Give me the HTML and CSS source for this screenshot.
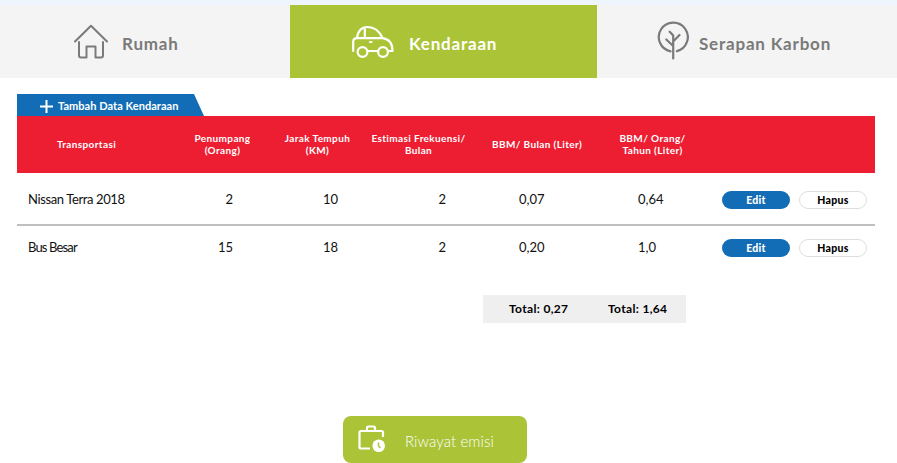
FILE: index.html
```html
<!DOCTYPE html>
<html lang="id">
<head>
<meta charset="utf-8">
<title>Kendaraan</title>
<link rel="stylesheet" href="styles.css">
</head>
<body>
<nav class="tabs">
  <a class="tab tab-home">
    <svg class="icon-home" width="36" height="36" viewBox="0 0 36 36" fill="none" stroke="#7a7a7a" stroke-width="2" stroke-linecap="round" stroke-linejoin="round"><path d="M2 17.500L18 1.800L34 17.500M6 18V31.500Q6 33.500 8 33.500H13.500V22.500H22.500V33.500H28Q30 33.500 30 31.500V18"/></svg>
    <span class="label-home">Rumah</span>
  </a>
  <a class="tab tab-car active">
    <svg class="icon-car" width="42" height="34" viewBox="0 0 42 34" fill="none" stroke="#fff" stroke-width="2.200" stroke-linecap="round" stroke-linejoin="round"><path d="M1.200 26V17Q1.200 13.200 5 13.200H30.500C37 14 40.500 18.500 40.500 26H36.500M5 13C6 5.500 9.500 2 15.500 2C23 2 27.500 6.500 30.500 13M12.800 2.500V13M16 26H25M18 17H19.500"/><circle cx="10.500" cy="27" r="4.900"/><circle cx="31" cy="27" r="4.900"/></svg>
    <span class="label-car">Kendaraan</span>
  </a>
  <a class="tab tab-tree">
    <svg class="icon-tree" width="32" height="40" viewBox="0 0 32 40" fill="none" stroke="#7a7a7a" stroke-width="2.200" stroke-linecap="round"><path d="M13.500 30.300A14.500 14.500 0 1 1 20 30.100M16.200 37.500V14.500L12.700 10.700M16.200 20.500L22.500 14M16.200 25L9.300 18.500"/></svg>
    <span class="label-tree">Serapan Karbon</span>
  </a>
</nav>
<main class="content">
  <a class="add">
    <svg width="13" height="13" viewBox="0 0 13 13" stroke="#fff" stroke-width="2"><path d="M6.500 0V13M0 6.500H13"/></svg>
    <span>Tambah Data Kendaraan</span>
  </a>
  <div class="row head">
    <div class="h-name">Transportasi</div>
    <div>Penumpang<br>(Orang)</div>
    <div>Jarak Tempuh<br>(KM)</div>
    <div>Estimasi Frekuensi/<br>Bulan</div>
    <div>BBM/ Bulan (Liter)</div>
    <div>BBM/ Orang/<br>Tahun (Liter)</div>
    <div></div>
  </div>
  <div class="row body first">
    <div class="name">Nissan Terra 2018</div>
    <div class="people">2</div>
    <div class="distance">10</div>
    <div class="freq">2</div>
    <div class="month">0,07</div>
    <div class="year">0,64</div>
    <div class="actions"><button class="edit">Edit</button><button class="delete">Hapus</button></div>
  </div>
  <div class="row body">
    <div class="name short">Bus Besar</div>
    <div class="people">15</div>
    <div class="distance">18</div>
    <div class="freq">2</div>
    <div class="month">0,20</div>
    <div class="year">1,0</div>
    <div class="actions"><button class="edit">Edit</button><button class="delete">Hapus</button></div>
  </div>
  <div class="totals"><span>Total: 0,27</span><span>Total: 1,64</span></div>
</main>
<button class="history">
  <svg width="28" height="28" viewBox="0 0 28 28" fill="none" stroke="#fff" stroke-width="2.200" stroke-linejoin="round"><path d="M12 23.500H3Q1.500 23.500 1.500 22V7.500Q1.500 6 3 6H23.500Q25 6 25 7.500V12M9 6V3Q9 1.500 10.500 1.500H15.500Q17 1.500 17 3V6"/><circle cx="20.700" cy="20.700" r="6.300" fill="#fff" stroke="none"/><path d="M20.500 17.500V21L22.500 23" stroke="#abc337" stroke-width="1.400"/></svg>
  <span>Riwayat emisi</span>
</button>
</body>
</html>
```
FILE: styles.css
```css
* { box-sizing: border-box; }
body {
  margin: 0;
  width: 897px;
  height: 463px;
  overflow: hidden;
  background: #fff;
  color: #111;
  font-family: Lato, "Liberation Sans", sans-serif;
}
button { border: 0; padding: 0; font-family: inherit; }
.tabs {
  display: grid;
  grid-template-columns: 290px 307px 300px;
  height: 78px;
  padding-top: 5px;
  background: linear-gradient(#eff5fc 5px, #f4f4f4 5px);
}
.tab {
  display: flex;
  align-items: center;
  color: #7a7a7a;
  font-size: 17px;
  font-weight: 700;
  letter-spacing: .8px;
  white-space: nowrap;
}
.tab span { line-height: 20px; margin-top: 4px; }
.tab-home { padding-left: 73px; }
.icon-home { margin-right: 13px; }
.tab-car { padding-left: 62px; }
.icon-car { margin-right: 15px; margin-top: 1px; }
.tab-tree { padding-left: 60px; }
.icon-tree { margin-right: 10px; margin-bottom: 1px; }
.active { background: #abc337; color: #fff; }
.content { padding: 16px 22px 0 17px; }
.add {
  display: flex;
  align-items: center;
  width: 187px;
  height: 22px;
  padding: 2px 0 0 23px;
  gap: 5px;
  background: #126db6;
  clip-path: polygon(0 0, 177px 0, 100% 100%, 0 100%);
  color: #fff;
  font-size: 11px;
  font-weight: 700;
  letter-spacing: .05px;
  white-space: nowrap;
}
.add span { margin-bottom: 2px; }
.row {
  display: grid;
  grid-template-columns: 158px 95px 95px 107px 130px 101px 172px;
  align-items: center;
  white-space: nowrap;
}
.head {
  height: 57px;
  padding-bottom: 2px;
  background: #ed1e32;
  color: #fff;
  font-size: 10px;
  font-weight: 700;
  letter-spacing: .38px;
  line-height: 12px;
  text-align: center;
}
.h-name { padding-right: 19px; }
.body {
  height: 48px;
  padding-bottom: 6px;
  font-size: 13px;
}
.first { height: 53px; padding: 1px 0 0; border-bottom: 2px solid #bfbfbf; }
.name { padding-left: 11px; letter-spacing: -.38px; }
.short { letter-spacing: -.85px; }
.people { text-align: right; padding-right: 37px; }
.distance { text-align: right; padding-right: 27px; }
.freq { text-align: right; padding-right: 26px; }
.month { padding-left: 47px; }
.year { padding-left: 36px; }
.actions { display: flex; gap: 9px; padding: 2px 0 0 19px; }
.edit, .delete {
  width: 68px;
  height: 18px;
  border-radius: 9px;
  font-size: 10.5px;
  font-weight: 900;
  letter-spacing: .3px;
  line-height: 18px;
}
.edit { background: #126db6; color: #fff; }
.delete { background: #fff; border: 1px solid #ddd; color: #000; line-height: 16px; }
.totals {
  display: grid;
  grid-template-columns: 99px 1fr;
  align-items: center;
  width: 203px;
  height: 28px;
  margin: 21px 0 0 466px;
  padding: 0 0 1px 26px;
  background: #efefef;
  color: #000;
  font-size: 12px;
  font-weight: 700;
  letter-spacing: .33px;
}
.history {
  display: flex;
  align-items: center;
  width: 184px;
  height: 47px;
  margin: 93px 0 0 343px;
  padding-left: 15px;
  gap: 19px;
  border-radius: 8px;
  background: #abc337;
  color: #fff;
  font-size: 15px;
  font-weight: 300;
  letter-spacing: .1px;
  white-space: nowrap;
}
.history svg { margin-bottom: 2px; }
.history span { margin-top: 3px; }
```
